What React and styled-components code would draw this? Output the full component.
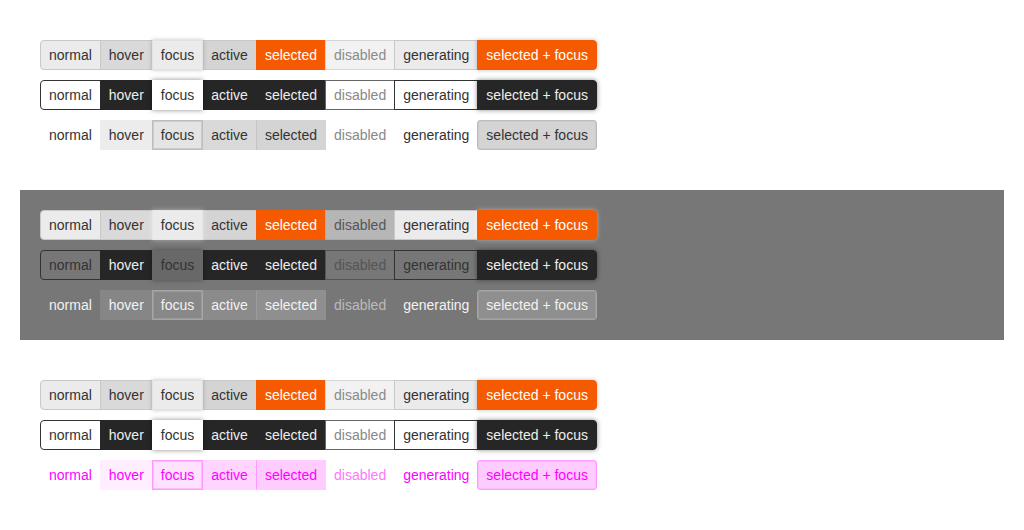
import React from "react";
import styled, { createGlobalStyle } from "styled-components";

const GlobalStyle = createGlobalStyle`
  html, body {
    margin: 0;
    padding: 0;
    background: #fff;
    font-family: "Liberation Sans", Arial, sans-serif;
  }
`;

const STATES = [
  "normal",
  "hover",
  "focus",
  "active",
  "selected",
  "disabled",
  "generating",
  "selected + focus",
];

const glowDark = "0 0 4px rgba(0,0,0,0.25)";
const glowLight = "0 0 5px rgba(255,255,255,0.4)";

// each palette: one entry per state, in STATES order
const solid = (disabled, glow, focusBd) => [
  { bg: "#ebebeb", fg: "#333", bd: "#c8c8c8" },
  { bg: "#d9d9d9", fg: "#333", bd: "#c8c8c8" },
  { bg: "#ebebeb", fg: "#333", bd: focusBd, sh: glow },
  { bg: "#d4d4d4", fg: "#333", bd: "#c8c8c8" },
  { bg: "#f55a00", fg: "#fff", bd: "#f55a00" },
  disabled,
  { bg: "#ebebeb", fg: "#333", bd: "#c8c8c8" },
  { bg: "#f55a00", fg: "#fff", bd: "#f55a00", sh: glow },
];

const solidLight = solid({ bg: "#f2f2f2", fg: "#8a8a8a", bd: "#d5d5d5" }, glowDark, "#e2e2e2");
const solidDark = solid({ bg: "#b6b6b6", fg: "#555", bd: "#aaa" }, glowLight, "#e6e6e6");

const outline = (base, focus, disabled) => [
  base,
  { bg: "#262626", fg: "#eee", bd: "#262626" },
  focus,
  { bg: "#262626", fg: "#eee", bd: "#262626" },
  { bg: "#262626", fg: "#eee", bd: "#262626" },
  disabled,
  base,
  { bg: "#262626", fg: "#eee", bd: "#262626", sh: "0 0 5px rgba(0,0,0,0.45)" },
];

const outlineLight = outline(
  { bg: "#fff", fg: "#333", bd: "#333" },
  { bg: "#fff", fg: "#333", bd: "#fff", sh: "0 0 5px rgba(0,0,0,0.45)" },
  { bg: "#fff", fg: "#888", bd: "#666" }
);
const outlineDark = outline(
  { bg: "transparent", fg: "#333", bd: "#333" },
  { bg: "#686868", fg: "#333", bd: "#686868", sh: "0 0 5px rgba(0,0,0,0.35)" },
  { bg: "transparent", fg: "#555", bd: "#555" }
);

const flat = (c) => [
  { bg: "transparent", fg: c.fg, bd: "transparent" },
  { bg: c.hover, fg: c.fg, bd: c.hover },
  { bg: c.focus, fg: c.fg, bd: c.ring, sh: `inset 0 0 0 1px ${c.ringIn}` },
  { bg: c.active, fg: c.fg, bd: `${c.active} ${c.active} ${c.active} ${c.line}` },
  { bg: c.sel, fg: c.fg, bd: `${c.sel} ${c.sel} ${c.sel} ${c.line}` },
  { bg: "transparent", fg: c.off, bd: "transparent" },
  { bg: "transparent", fg: c.fg, bd: "transparent" },
  { bg: c.sel, fg: c.fg, bd: c.ring, sh: `inset 0 0 0 1px ${c.ringIn}`, round: true },
];

const flatLight = flat({
  fg: "#333",
  off: "#888",
  hover: "#ececec",
  focus: "#e4e4e4",
  active: "#d9d9d9",
  sel: "#d4d4d4",
  line: "#c4c4c4",
  ring: "#bdbdbd",
  ringIn: "#cbcbcb",
});
const flatDark = flat({
  fg: "#f2f2f2",
  off: "#bbb",
  hover: "#868686",
  focus: "#888",
  active: "#8b8b8b",
  sel: "#8f8f8f",
  line: "#9c9c9c",
  ring: "#a6a6a6",
  ringIn: "#999",
});
const flatMagenta = flat({
  fg: "#f0f",
  off: "#f7f",
  hover: "#ffeeff",
  focus: "#ffe2ff",
  active: "#ffd4ff",
  sel: "#fcf",
  line: "#f9f",
  ring: "#f9f",
  ringIn: "#fbf",
});

const SECTIONS = [
  { dark: false, rows: [solidLight, outlineLight, flatLight] },
  { dark: true, rows: [solidDark, outlineDark, flatDark] },
  { dark: false, rows: [solidLight, outlineLight, flatMagenta] },
];

function App() {
  return (
    <Page>
      <GlobalStyle />
      {SECTIONS.map((section, i) => (
        <Section key={i} $dark={section.dark}>
          {section.rows.map((palette, r) => (
            <Group key={r}>
              {STATES.map((label, s) => {
                const st = palette[s];
                return (
                  <Btn
                    key={label}
                    $bg={st.bg}
                    $fg={st.fg}
                    $bd={st.bd}
                    $sh={st.sh}
                    $round={st.round}
                  >
                    {label}
                  </Btn>
                );
              })}
            </Group>
          ))}
        </Section>
      ))}
    </Page>
  );
}

export default App;

const Page = styled.div`
  display: flex;
  flex-direction: column;
  gap: 20px;
  padding: 20px;
  width: 1024px;
  height: 530px;
  box-sizing: border-box;
`;

const Section = styled.section`
  display: flex;
  flex-direction: column;
  gap: 10px;
  padding: 20px;
  background: ${(p) => (p.$dark ? "#777777" : "transparent")};
`;

const Group = styled.div`
  display: flex;
  height: 30px;
`;

const Btn = styled.button`
  position: relative;
  z-index: ${(p) => (p.$sh ? 1 : 0)};
  box-sizing: border-box;
  height: 30px;
  margin: 0 0 0 -1px;
  padding: 0 8px;
  border: 1px solid;
  border-color: ${(p) => p.$bd};
  border-radius: ${(p) => (p.$round ? "3px" : "0")};
  background: ${(p) => p.$bg};
  color: ${(p) => p.$fg};
  box-shadow: ${(p) => p.$sh || "none"};
  font-family: "Liberation Sans", Arial, sans-serif;
  font-size: 14px;
  line-height: 28px;
  white-space: nowrap;
  cursor: default;

  &:first-child {
    margin-left: 0;
    border-radius: 4px 0 0 4px;
  }
  &:last-child {
    border-radius: ${(p) => (p.$round ? "3px" : "0 4px 4px 0")};
  }
`;
